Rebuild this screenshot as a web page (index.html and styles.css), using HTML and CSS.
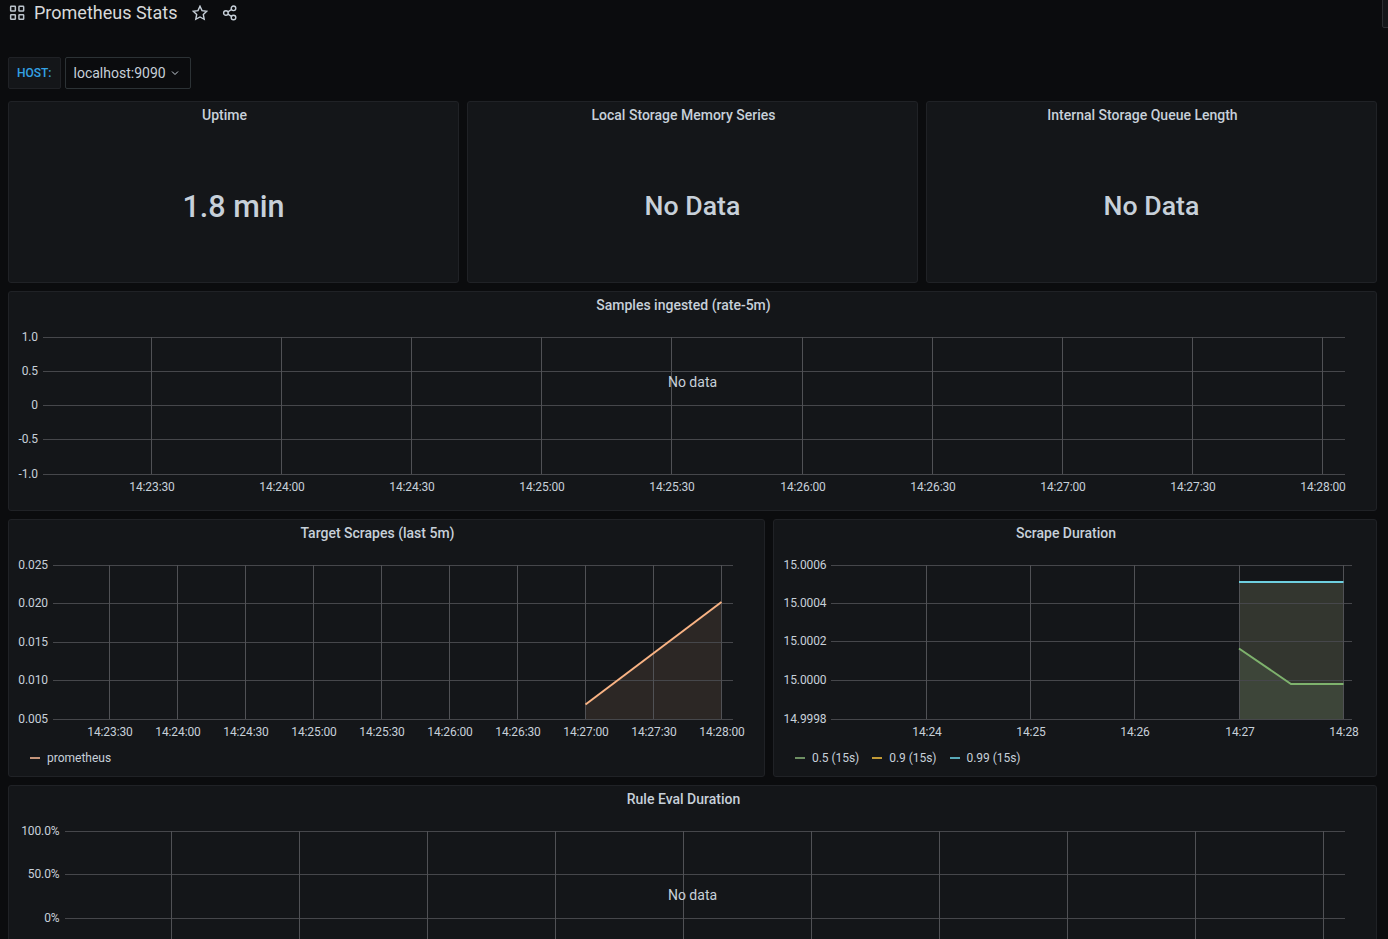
FILE: index.html
```html
<!doctype html>
<html lang="en">
<head>
  <meta charset="UTF-8">
  <title>Prometheus Stats</title>
  <link rel="stylesheet" href="styles.css">
</head>
<body>
  <div class="scroll-thumb"></div>
  <header class="topbar">
    <svg class="icon-grid" width="16" height="16" viewBox="0 0 16 16">
      <rect x="1.650" y="1.350" width="4.700" height="4.700" rx="0.600"/>
      <rect x="9.950" y="1.350" width="4.700" height="4.700" rx="0.600"/>
      <rect x="1.650" y="9.650" width="4.700" height="4.700" rx="0.600"/>
      <rect x="9.950" y="9.650" width="4.700" height="4.700" rx="0.600"/>
    </svg>
    <h1 class="dash-title">Prometheus Stats</h1>
    <svg class="icon-btn icon-star" width="16" height="16" viewBox="0 0 16 16">
      <path d="M8 1.200l2 4.400 4.800.6-3.500 3.300.9 4.800L8 12l-4.200 2.300.9-4.800L1.200 6.200 6 5.600z"/>
    </svg>
    <svg class="icon-btn icon-share" width="16" height="16" viewBox="0 0 16 16">
      <circle cx="3.900" cy="8" r="2.300"/>
      <circle cx="11.500" cy="3.300" r="2.300"/>
      <circle cx="11.500" cy="12.500" r="2.300"/>
      <path d="M5.900 6.800l3.600-2.300M5.900 9.200l3.600 2.100"/>
    </svg>
  </header>

  <section class="vars">
    <label class="var-label">HOST:</label>
    <div class="var-select">
      <span>localhost:9090</span>
      <svg class="icon-chevron" width="8" height="8" viewBox="0 0 8 8"><path d="M1 2.500l3 3 3-3"/></svg>
    </div>
  </section>

  <main class="dash">
    <div class="row row-stats">
      <article class="panel">
        <h2 class="panel-title">Uptime</h2>
        <div class="stat-value stat-number">1.8 min</div>
      </article>
      <article class="panel">
        <h2 class="panel-title">Local Storage Memory Series</h2>
        <div class="stat-value">No Data</div>
      </article>
      <article class="panel">
        <h2 class="panel-title">Internal Storage Queue Length</h2>
        <div class="stat-value">No Data</div>
      </article>
    </div>

    <div class="row row-wide">
      <article class="panel">
        <h2 class="panel-title">Samples ingested (rate-5m)</h2>
        <svg class="chart" width="1367" height="190" viewBox="9 320 1367 190">
          <path class="grid-h" d="M43 337.500H1345M43 371.500H1345M43 405.500H1345M43 439.500H1345M43 474.500H1345"/>
          <path class="grid-v" d="M151.500 337V474M281.500 337V474M411.500 337V474M541.500 337V474M671.500 337V474M802.500 337V474M932.500 337V474M1062.500 337V474M1192.500 337V474M1322.500 337V474"/>
          <g class="ticks-y">
            <text x="38" y="341">1.0</text>
            <text x="38" y="375">0.5</text>
            <text x="38" y="409">0</text>
            <text x="38" y="443">-0.5</text>
            <text x="38" y="478">-1.0</text>
          </g>
          <g class="ticks-x">
            <text x="152" y="491">14:23:30</text>
            <text x="282" y="491">14:24:00</text>
            <text x="412" y="491">14:24:30</text>
            <text x="542" y="491">14:25:00</text>
            <text x="672" y="491">14:25:30</text>
            <text x="803" y="491">14:26:00</text>
            <text x="933" y="491">14:26:30</text>
            <text x="1063" y="491">14:27:00</text>
            <text x="1193" y="491">14:27:30</text>
            <text x="1323" y="491">14:28:00</text>
          </g>
          <text class="no-data" x="692.500" y="387">No data</text>
        </svg>
      </article>
    </div>

    <div class="row row-split">
      <article class="panel">
        <h2 class="panel-title">Target Scrapes (last 5m)</h2>
        <svg class="chart" width="755" height="198" viewBox="9 548 755 198">
          <path class="fill-orange" d="M585.500 704.500L721.500 602V719H585.500z"/>
          <path class="grid-h" d="M53 565.500H733M53 603.500H733M53 642.500H733M53 680.500H733M53 719.500H733"/>
          <path class="grid-v" d="M109.500 565V719M177.500 565V719M245.500 565V719M313.500 565V719M381.500 565V719M449.500 565V719M517.500 565V719M585.500 565V719M653.500 565V719M721.500 565V719"/>
          <path class="line-orange" d="M585.500 704.500L721.500 602"/>
          <g class="ticks-y">
            <text x="48" y="569">0.025</text>
            <text x="48" y="607">0.020</text>
            <text x="48" y="646">0.015</text>
            <text x="48" y="684">0.010</text>
            <text x="48" y="723">0.005</text>
          </g>
          <g class="ticks-x">
            <text x="110" y="736">14:23:30</text>
            <text x="178" y="736">14:24:00</text>
            <text x="246" y="736">14:24:30</text>
            <text x="314" y="736">14:25:00</text>
            <text x="382" y="736">14:25:30</text>
            <text x="450" y="736">14:26:00</text>
            <text x="518" y="736">14:26:30</text>
            <text x="586" y="736">14:27:00</text>
            <text x="654" y="736">14:27:30</text>
            <text x="722" y="736">14:28:00</text>
          </g>
        </svg>
        <ul class="legend">
          <li class="legend-item"><i class="swatch swatch-orange"></i>prometheus</li>
        </ul>
      </article>
      <article class="panel">
        <h2 class="panel-title">Scrape Duration</h2>
        <svg class="chart" width="602" height="198" viewBox="774 548 602 198">
          <path class="fill-olive" d="M1239 582H1343.500V719H1239z"/>
          <path class="fill-green" d="M1239 648.500L1291 684H1343.500V719H1239z"/>
          <path class="grid-h" d="M831 565.500H1352M831 603.500H1352M831 641.500H1352M831 680.500H1352M831 719.500H1352"/>
          <path class="grid-v" d="M926.500 565V719M1030.500 565V719M1134.500 565V719M1239.500 565V719M1343.500 565V719"/>
          <path class="line-blue" d="M1239 582H1343.500"/>
          <path class="line-green" d="M1239 648.500L1291 684H1343.500"/>
          <g class="ticks-y">
            <text x="826.500" y="569">15.0006</text>
            <text x="826.500" y="607">15.0004</text>
            <text x="826.500" y="645">15.0002</text>
            <text x="826.500" y="684">15.0000</text>
            <text x="826.500" y="723">14.9998</text>
          </g>
          <g class="ticks-x">
            <text x="927" y="736">14:24</text>
            <text x="1031" y="736">14:25</text>
            <text x="1135" y="736">14:26</text>
            <text x="1240" y="736">14:27</text>
            <text x="1344" y="736">14:28</text>
          </g>
        </svg>
        <ul class="legend legend-nums">
          <li class="legend-item"><i class="swatch swatch-green"></i>0.5 (15s)</li>
          <li class="legend-item"><i class="swatch swatch-yellow"></i>0.9 (15s)</li>
          <li class="legend-item"><i class="swatch swatch-blue"></i>0.99 (15s)</li>
        </ul>
      </article>
    </div>

    <div class="row row-wide">
      <article class="panel">
        <h2 class="panel-title">Rule Eval Duration</h2>
        <svg class="chart" width="1367" height="190" viewBox="9 814 1367 190">
          <path class="grid-h" d="M65 831.500H1345M65 874.500H1345M65 918.500H1345M65 961.500H1345"/>
          <path class="grid-v" d="M171.500 831V1004M299.500 831V1004M427.500 831V1004M555.500 831V1004M683.500 831V1004M811.500 831V1004M939.500 831V1004M1067.500 831V1004M1195.500 831V1004M1323.500 831V1004"/>
          <g class="ticks-y">
            <text x="59.500" y="835">100.0%</text>
            <text x="59.500" y="878">50.0%</text>
            <text x="59.500" y="922">0%</text>
          </g>
          <text class="no-data" x="692.500" y="900">No data</text>
        </svg>
      </article>
    </div>
  </main>
</body>
</html>
```

FILE: styles.css
```css
* {
  box-sizing: border-box;
}
html, body {
  height: 100%;
  overflow: hidden;
}
body {
  margin: 0;
  position: relative;
  background: #0b0c0e;
  color: #c7d0d9;
  font-family: Roboto, "Liberation Sans", sans-serif;
  font-size: 14px;
}
.scroll-thumb {
  position: absolute;
  top: -2px;
  right: -2px;
  width: 8px;
  height: 30px;
  background: #141619;
  border: 1px solid #2c2e32;
  border-radius: 2px;
}

/* top bar */
.topbar {
  display: flex;
  align-items: center;
  height: 26px;
  padding-left: 9px;
}
.icon-grid rect {
  fill: none;
  stroke: #bcc4cc;
  stroke-width: 1.5;
}
.dash-title {
  margin: 0 0 2px 9px;
  font-size: 18px;
  font-weight: 400;
  color: #d8d9da;
}
.icon-btn {
  fill: none;
  stroke: #c7d0d9;
  stroke-width: 1.4;
}
.icon-star {
  margin-left: 15px;
}
.icon-share {
  margin-left: 14px;
}

/* template variables */
.vars {
  display: flex;
  gap: 4px;
  height: 32px;
  margin: 31px 0 12px 8px;
}
.var-label {
  display: flex;
  align-items: center;
  padding: 0 8px;
  background: #141619;
  border: 1px solid #202226;
  border-radius: 2px;
  color: #33a2e5;
  font-size: 12px;
  font-weight: 500;
}
.var-select {
  display: flex;
  align-items: center;
  gap: 5px;
  width: 126px;
  padding-left: 8px;
  background: #0b0c0e;
  border: 1px solid #2c3235;
  border-radius: 2px;
}
.icon-chevron {
  fill: none;
  stroke: #c7d0d9;
  stroke-width: 1;
}

/* panels */
.dash {
  display: flex;
  flex-direction: column;
  gap: 8px;
  width: 1369px;
  margin-left: 8px;
}
.row {
  display: grid;
  gap: 8px;
}
.row-stats {
  grid-template-columns: repeat(3, 451px);
  height: 182px;
}
.row-wide {
  grid-template-columns: 1369px;
  height: 220px;
}
.row-split {
  grid-template-columns: 757px 604px;
  height: 258px;
}
.panel {
  display: flex;
  flex-direction: column;
  background: #141619;
  border: 1px solid #202226;
  border-radius: 3px;
}
.panel-title {
  height: 28px;
  margin: 0;
  padding-right: 18px;
  font-size: 14px;
  font-weight: 500;
  line-height: 26px;
  text-align: center;
}
.stat-value {
  flex: 1;
  display: flex;
  align-items: center;
  justify-content: center;
  font-size: 26.7px;
  font-weight: 500;
}
.stat-number {
  font-size: 30.5px;
}

/* charts */
.chart {
  display: block;
  flex: none;
}
.grid-h {
  fill: none;
  stroke: #46474b;
  shape-rendering: crispEdges;
}
.grid-v {
  fill: none;
  stroke: #505155;
  shape-rendering: crispEdges;
}
.ticks-y text,
.ticks-x text {
  fill: #c7d0d9;
  font-size: 12px;
  letter-spacing: -0.1px;
}
.ticks-y text {
  text-anchor: end;
}
.ticks-x text {
  text-anchor: middle;
}
.no-data {
  fill: #c7d0d9;
  font-size: 14px;
  text-anchor: middle;
}
.line-orange {
  fill: none;
  stroke: #f9b384;
  stroke-width: 2;
}
.fill-orange {
  fill: #2c2725;
}
.fill-olive {
  fill: #33362f;
}
.fill-green {
  fill: #3d4539;
}
.line-blue {
  fill: none;
  stroke: #6ed0e0;
  stroke-width: 2;
}
.line-green {
  fill: none;
  stroke: #7eb26d;
  stroke-width: 2;
}

/* legend */
.legend {
  display: flex;
  gap: 13px;
  height: 24px;
  margin: 0;
  padding: 0 0 0 21px;
  list-style: none;
  font-size: 12px;
}
.legend-nums {
  letter-spacing: -0.04px;
}
.legend-item {
  display: flex;
  align-items: center;
  gap: 7px;
}
.swatch {
  display: block;
  width: 10px;
  height: 2px;
}
.swatch-orange {
  background: #c4947a;
}
.swatch-green {
  background: #6d8f62;
}
.swatch-yellow {
  background: #c29a36;
}
.swatch-blue {
  background: #58a9b8;
}
```
